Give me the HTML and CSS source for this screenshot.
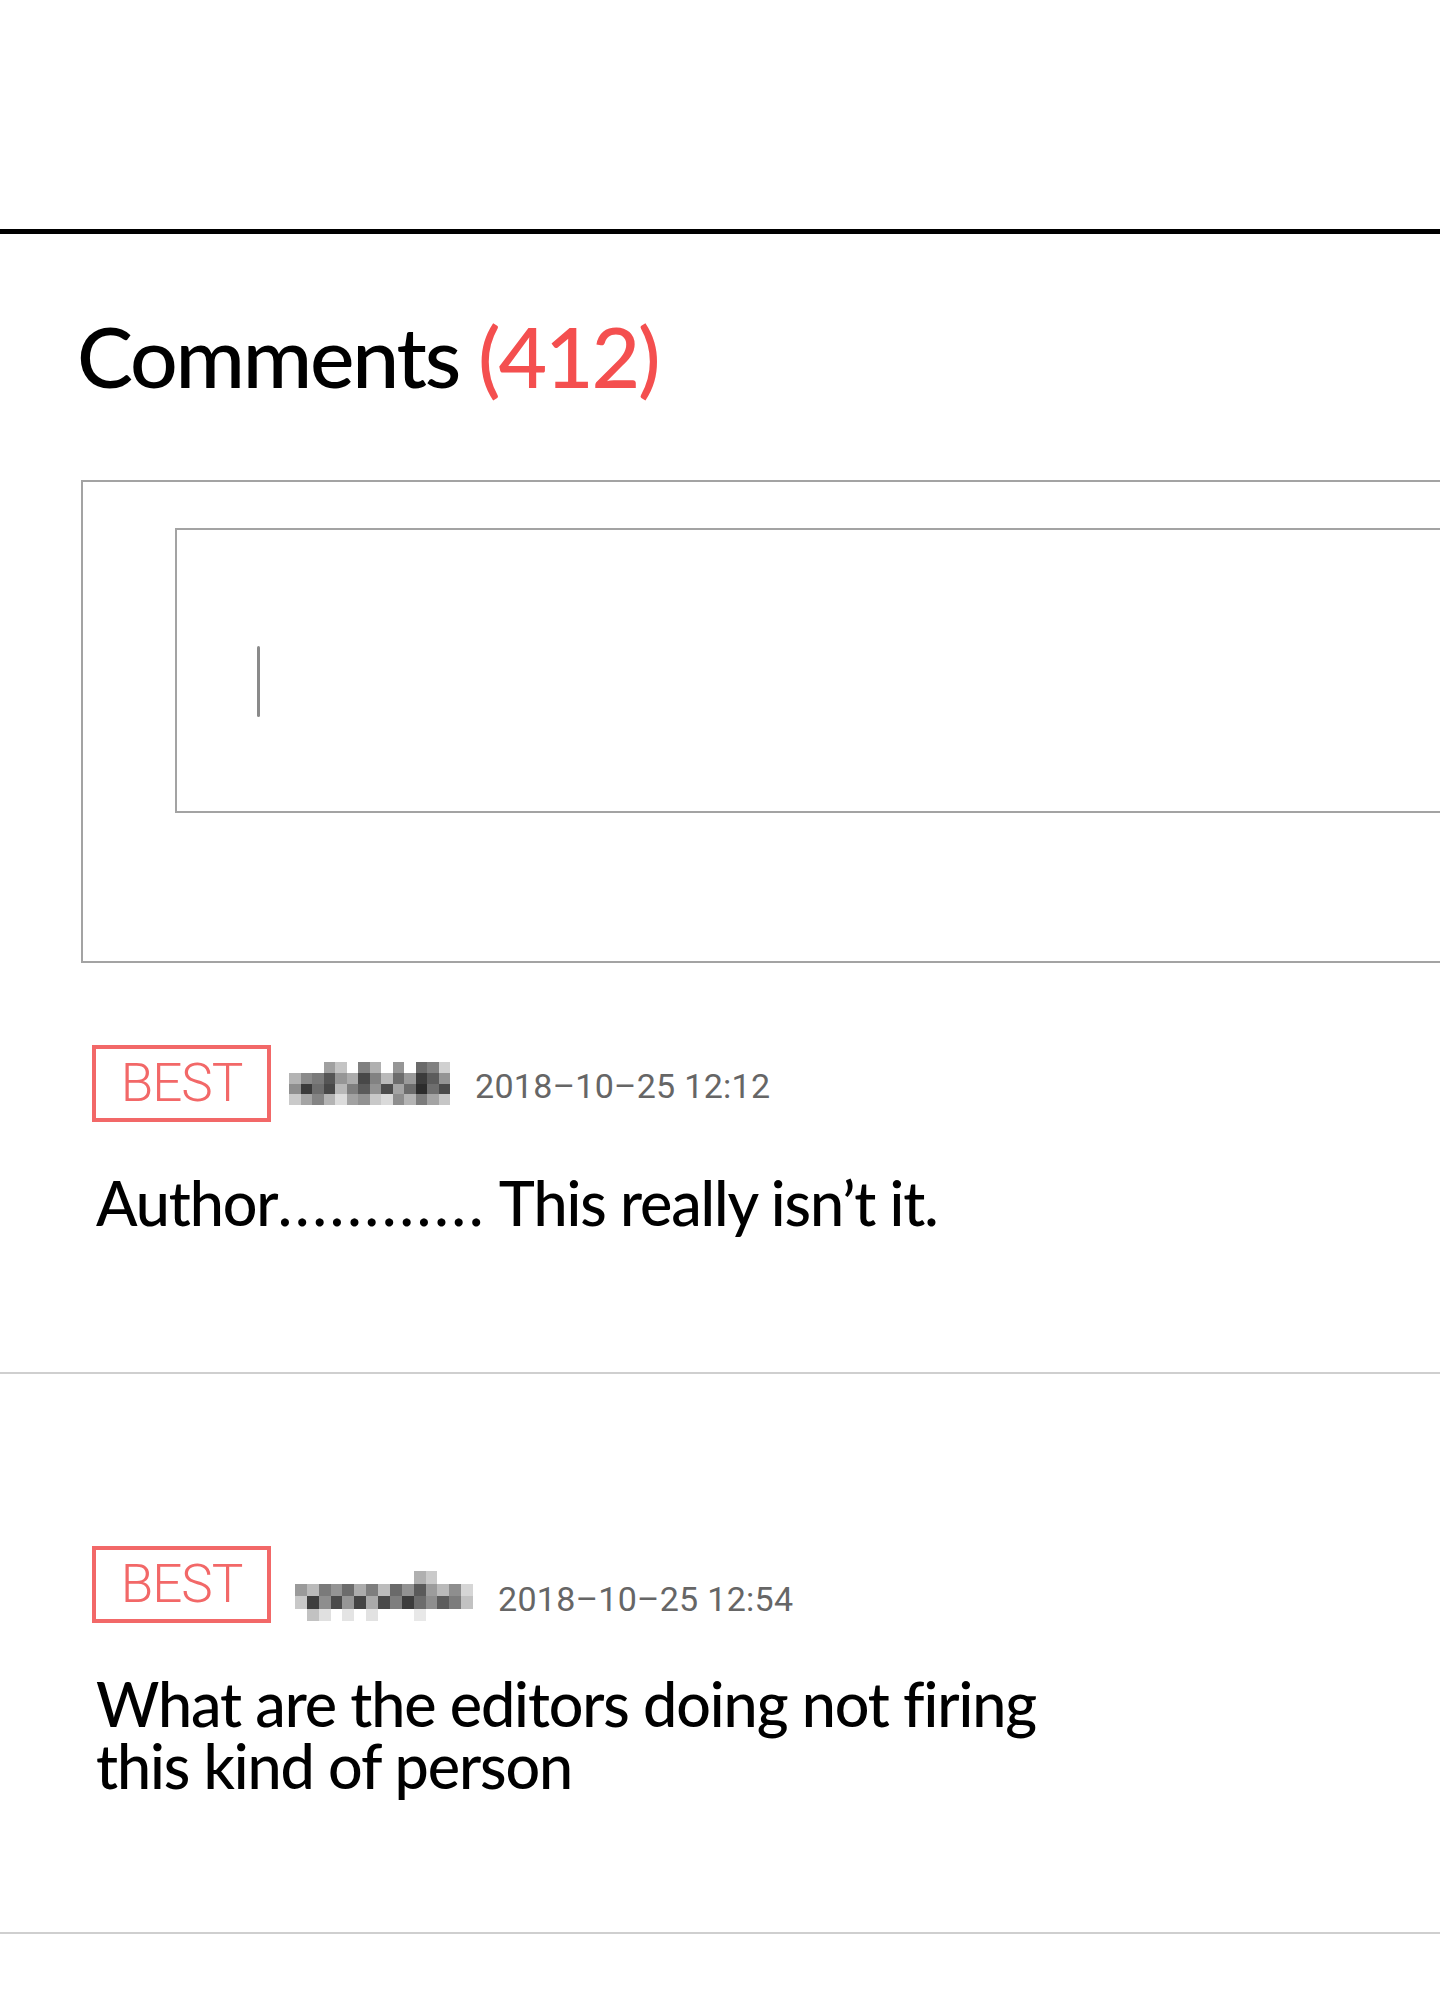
FILE: index.html
```html
<!DOCTYPE html>
<html lang="en">
<head>
<meta charset="utf-8">
    <title>Comments</title>
    <link rel="stylesheet" href="styles.css">
</head>
<body>
    <div class="top-space"></div>
    <div class="top-rule"></div>

    <section class="comments">
        <h2 class="comments-title">Comments <span class="count">(412)</span></h2>

        <div class="write-box">
            <div class="write-input"><span class="caret"></span></div>
        </div>

        <ul class="comment-list">
            <li class="comment">
                <div class="meta">
                    <span class="badge">BEST</span>
                    <!-- nickname is hidden behind a mosaic -->
                    <svg class="nick nick-1" viewBox="0 0 14 4" preserveAspectRatio="none">
                        <rect x="3" y="0" width="1" height="1" fill="#a0a0a0"/>
                        <rect x="4" y="0" width="1" height="1" fill="#c4c4c4"/>
                        <rect x="6" y="0" width="1" height="1" fill="#808080"/>
                        <rect x="7" y="0" width="1" height="1" fill="#b0b0b0"/>
                        <rect x="9" y="0" width="1" height="1" fill="#969696"/>
                        <rect x="11" y="0" width="1" height="1" fill="#6a6a6a"/>
                        <rect x="12" y="0" width="1" height="1" fill="#808080"/>
                        <rect x="13" y="0" width="1" height="1" fill="#d0d0d0"/>
                        <rect x="0" y="1" width="1" height="1" fill="#b4b4b4"/>
                        <rect x="1" y="1" width="1" height="1" fill="#8a8a8a"/>
                        <rect x="2" y="1" width="1" height="1" fill="#7a7a7a"/>
                        <rect x="3" y="1" width="1" height="1" fill="#555"/>
                        <rect x="4" y="1" width="1" height="1" fill="#969696"/>
                        <rect x="5" y="1" width="1" height="1" fill="#acacac"/>
                        <rect x="6" y="1" width="1" height="1" fill="#484848"/>
                        <rect x="7" y="1" width="1" height="1" fill="#828282"/>
                        <rect x="8" y="1" width="1" height="1" fill="#bababa"/>
                        <rect x="9" y="1" width="1" height="1" fill="#6c6c6c"/>
                        <rect x="10" y="1" width="1" height="1" fill="#9a9a9a"/>
                        <rect x="11" y="1" width="1" height="1" fill="#3c3c3c"/>
                        <rect x="12" y="1" width="1" height="1" fill="#5c5c5c"/>
                        <rect x="13" y="1" width="1" height="1" fill="#949494"/>
                        <rect x="0" y="2" width="1" height="1" fill="#8e8e8e"/>
                        <rect x="1" y="2" width="1" height="1" fill="#3a3a3a"/>
                        <rect x="2" y="2" width="1" height="1" fill="#6e6e6e"/>
                        <rect x="3" y="2" width="1" height="1" fill="#484848"/>
                        <rect x="4" y="2" width="1" height="1" fill="#b8b8b8"/>
                        <rect x="5" y="2" width="1" height="1" fill="#7e7e7e"/>
                        <rect x="6" y="2" width="1" height="1" fill="#5a5a5a"/>
                        <rect x="7" y="2" width="1" height="1" fill="#929292"/>
                        <rect x="8" y="2" width="1" height="1" fill="#4c4c4c"/>
                        <rect x="9" y="2" width="1" height="1" fill="#a4a4a4"/>
                        <rect x="10" y="2" width="1" height="1" fill="#6c6c6c"/>
                        <rect x="11" y="2" width="1" height="1" fill="#2c2c2c"/>
                        <rect x="12" y="2" width="1" height="1" fill="#6e6e6e"/>
                        <rect x="13" y="2" width="1" height="1" fill="#4a4a4a"/>
                        <rect x="0" y="3" width="1" height="1" fill="#cacaca"/>
                        <rect x="1" y="3" width="1" height="1" fill="#a4a4a4"/>
                        <rect x="2" y="3" width="1" height="1" fill="#848484"/>
                        <rect x="3" y="3" width="1" height="1" fill="#b4b4b4"/>
                        <rect x="4" y="3" width="1" height="1" fill="#dcdcdc"/>
                        <rect x="5" y="3" width="1" height="1" fill="#a2a2a2"/>
                        <rect x="6" y="3" width="1" height="1" fill="#929292"/>
                        <rect x="7" y="3" width="1" height="1" fill="#c8c8c8"/>
                        <rect x="8" y="3" width="1" height="1" fill="#dadada"/>
                        <rect x="9" y="3" width="1" height="1" fill="#8e8e8e"/>
                        <rect x="10" y="3" width="1" height="1" fill="#b4b4b4"/>
                        <rect x="11" y="3" width="1" height="1" fill="#7c7c7c"/>
                        <rect x="12" y="3" width="1" height="1" fill="#a4a4a4"/>
                        <rect x="13" y="3" width="1" height="1" fill="#c6c6c6"/>
                    </svg>
                    <span class="date">2018–10–25 12:12</span>
                </div>
                <p class="text">Author<span class="dots">............</span> This really isn’t it.</p>
            </li>

            <li class="comment">
                <div class="meta">
                    <span class="badge">BEST</span>
                    <svg class="nick nick-2" viewBox="0 0 15 4" preserveAspectRatio="none">
                        <rect x="10" y="0" width="1" height="1" fill="#b0b0b0"/>
                        <rect x="11" y="0" width="1" height="1" fill="#cacaca"/>
                        <rect x="0" y="1" width="1" height="1" fill="#9a9a9a"/>
                        <rect x="1" y="1" width="1" height="1" fill="#bababa"/>
                        <rect x="2" y="1" width="1" height="1" fill="#7a7a7a"/>
                        <rect x="3" y="1" width="1" height="1" fill="#949494"/>
                        <rect x="4" y="1" width="1" height="1" fill="#6c6c6c"/>
                        <rect x="5" y="1" width="1" height="1" fill="#acacac"/>
                        <rect x="6" y="1" width="1" height="1" fill="#7e7e7e"/>
                        <rect x="7" y="1" width="1" height="1" fill="#bcbcbc"/>
                        <rect x="8" y="1" width="1" height="1" fill="#6a6a6a"/>
                        <rect x="9" y="1" width="1" height="1" fill="#929292"/>
                        <rect x="10" y="1" width="1" height="1" fill="#5a5a5a"/>
                        <rect x="11" y="1" width="1" height="1" fill="#9c9c9c"/>
                        <rect x="12" y="1" width="1" height="1" fill="#bababa"/>
                        <rect x="13" y="1" width="1" height="1" fill="#8e8e8e"/>
                        <rect x="14" y="1" width="1" height="1" fill="#d6d6d6"/>
                        <rect x="0" y="2" width="1" height="1" fill="#c8c8c8"/>
                        <rect x="1" y="2" width="1" height="1" fill="#3e3e3e"/>
                        <rect x="2" y="2" width="1" height="1" fill="#8e8e8e"/>
                        <rect x="3" y="2" width="1" height="1" fill="#4a4a4a"/>
                        <rect x="4" y="2" width="1" height="1" fill="#969696"/>
                        <rect x="5" y="2" width="1" height="1" fill="#444"/>
                        <rect x="6" y="2" width="1" height="1" fill="#aaaaaa"/>
                        <rect x="7" y="2" width="1" height="1" fill="#4a4a4a"/>
                        <rect x="8" y="2" width="1" height="1" fill="#7e7e7e"/>
                        <rect x="9" y="2" width="1" height="1" fill="#3c3c3c"/>
                        <rect x="10" y="2" width="1" height="1" fill="#6c6c6c"/>
                        <rect x="11" y="2" width="1" height="1" fill="#8e8e8e"/>
                        <rect x="12" y="2" width="1" height="1" fill="#5c5c5c"/>
                        <rect x="13" y="2" width="1" height="1" fill="#7c7c7c"/>
                        <rect x="14" y="2" width="1" height="1" fill="#c2c2c2"/>
                        <rect x="1" y="3" width="1" height="1" fill="#c2c2c2"/>
                        <rect x="2" y="3" width="1" height="1" fill="#e0e0e0"/>
                        <rect x="4" y="3" width="1" height="1" fill="#e4e4e4"/>
                        <rect x="6" y="3" width="1" height="1" fill="#e2e2e2"/>
                        <rect x="10" y="3" width="1" height="1" fill="#e8e8e8"/>
                    </svg>
                    <span class="date date-low">2018–10–25 12:54</span>
                </div>
                <p class="text">What are the editors doing not firing<br>this kind of person</p>
            </li>
        </ul>
    </section>
</body>
</html>
```

FILE: styles.css
```css
html, body {
    margin: 0;
    padding: 0;
    background-color: #fff;
    overflow-x: hidden;
}
body {
    font-family: Lato, "Noto Sans", sans-serif;
    color: #000;
}
.top-space {
    height: 229px;
}
.top-rule {
    height: 5px;
    background-color: #000;
}
.comments-title {
    margin: 80px 0 0 77px;
    font-size: 84px;
    line-height: 84px;
    font-weight: 500;
    letter-spacing: -2.2px;
}
.count {
    color: #f44f4f;
}
.write-box {
    margin: 82px 0 0 81px;
    width: 1500px;
    border: 2px solid #a3a3a3;
    padding: 46px 0 148px 92px;
    box-sizing: border-box;
}
.write-input {
    height: 285px;
    border: 2px solid #a3a3a3;
    box-sizing: border-box;
    padding: 116px 0 0 80px;
}
.caret {
    display: block;
    width: 3px;
    height: 71px;
    border-radius: 2px;
    background-color: #8a8a8a;
}
.comment-list {
    list-style: none;
    margin: 0;
    padding: 0;
}
.comment {
    padding: 82px 0 138px 92px;
    border-bottom: 2px solid #cfcfcf;
}
.comment + .comment {
    padding-top: 172px;
    padding-bottom: 135px;
}
.meta {
    display: flex;
    align-items: center;
}
.badge {
    width: 179px;
    height: 77px;
    box-sizing: border-box;
    border: 4px solid #f26868;
    color: #f26868;
    font-family: Roboto, "Liberation Sans", sans-serif;
    font-weight: 300;
    font-size: 53px;
    line-height: 69px;
    text-align: center;
    letter-spacing: -1px;
}
.nick {
    display: block;
    shape-rendering: crispEdges;
}
.nick-1 {
    width: 161px;
    height: 43px;
    margin: 0 25px 0 18px;
}
.nick-2 {
    width: 178px;
    height: 50px;
    margin: 22px 25px 0 24px;
}
.date {
    font-family: Roboto, "Liberation Sans", sans-serif;
    font-size: 34px;
    color: #666;
    margin-top: 5px;
    letter-spacing: 0.3px;
}
.date-low {
    margin-top: 28px;
}
.text {
    margin: 50px 0 0 4px;
    font-size: 61px;
    line-height: 62px;
    font-weight: 500;
    letter-spacing: -1.1px;
}
.dots {
    letter-spacing: 3px;
}
```
